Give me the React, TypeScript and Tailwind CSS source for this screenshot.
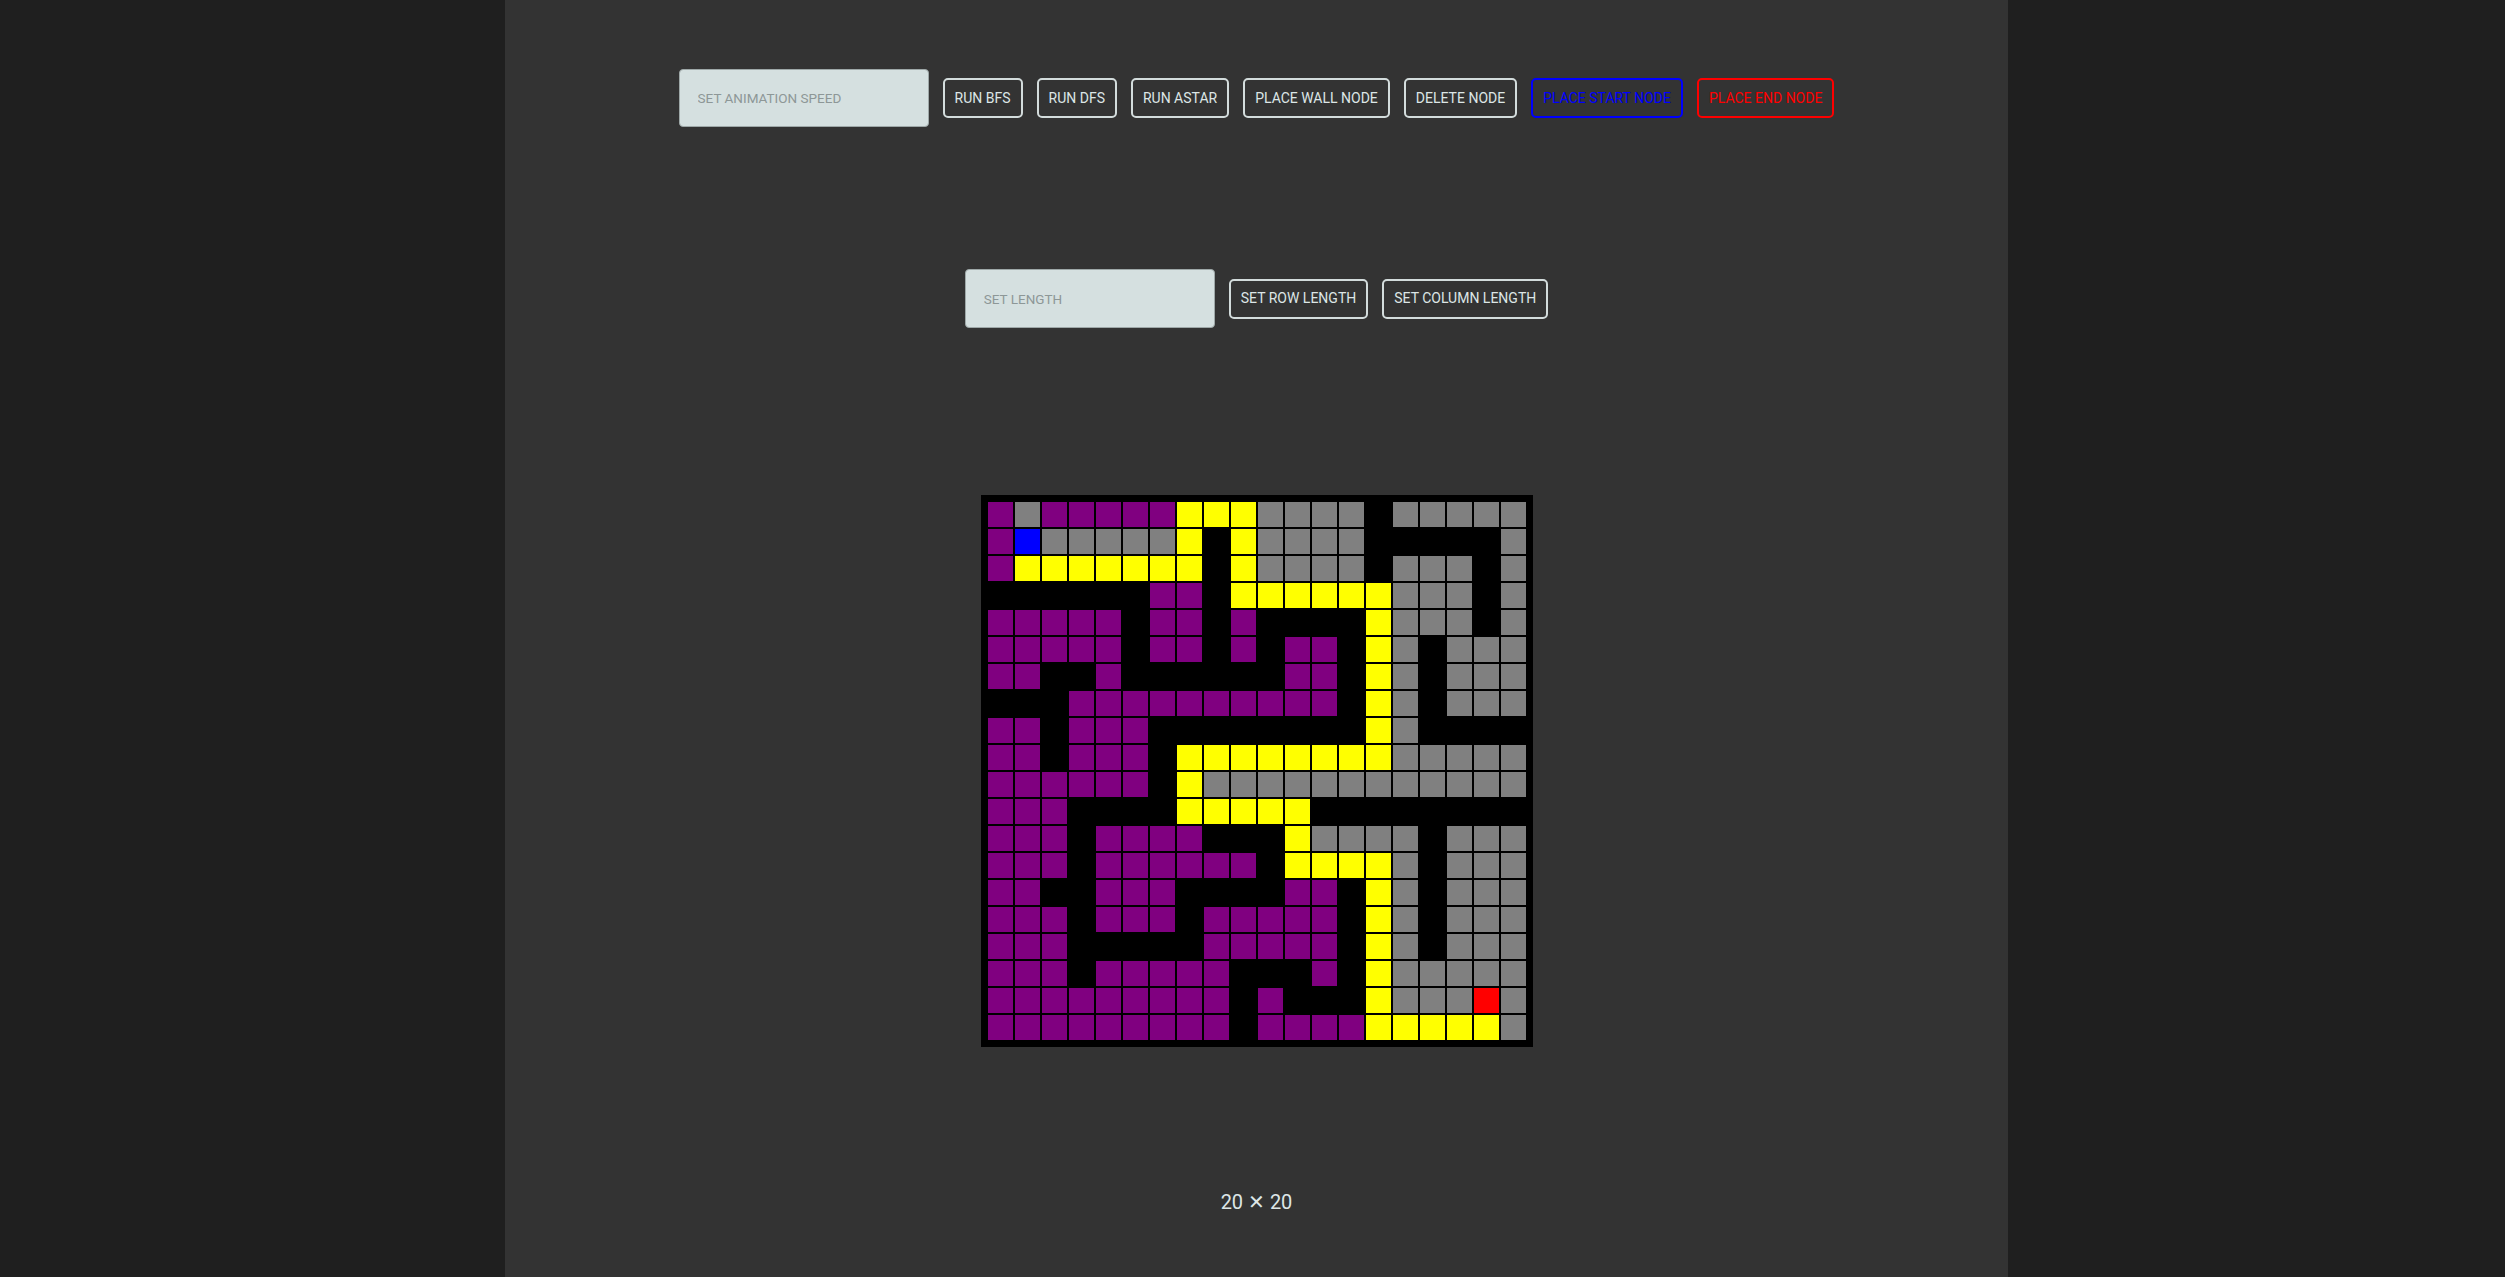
import { useState } from "react"

// maze state after a search run
// P visited, G unvisited, Y path, . wall, B start, R end
const MAZE = [
    "PGPPPPPYYYGGGG.GGGGG",
    "PBGGGGGY.YGGGG.....G",
    "PYYYYYYY.YGGGG.GGG.G",
    "......PP.YYYYYYGGG.G",
    "PPPPP.PP.P....YGGG.G",
    "PPPPP.PP.P.PP.YG.GGG",
    "PP..P......PP.YG.GGG",
    "...PPPPPPPPPP.YG.GGG",
    "PP.PPP........YG....",
    "PP.PPP.YYYYYYYYGGGGG",
    "PPPPPP.YGGGGGGGGGGGG",
    "PPP....YYYYY........",
    "PPP.PPPP...YGGGG.GGG",
    "PPP.PPPPPP.YYYYG.GGG",
    "PP..PPP....PP.YG.GGG",
    "PPP.PPP.PPPPP.YG.GGG",
    "PPP.....PPPPP.YG.GGG",
    "PPP.PPPPP...P.YGGGGG",
    "PPPPPPPPP.P...YGGGRG",
    "PPPPPPPPP.PPPPYYYYYG",
]

function cellColor(c: string) {
    switch (c) {
        case "P": return "bg-[#800080]"
        case "G": return "bg-[#808080]"
        case "Y": return "bg-[#ffff00]"
        case "B": return "bg-[#0000ff]"
        case "R": return "bg-[#ff0000]"
        default: return "bg-black"
    }
}

const btn = "h-[40px] px-[10px] border-2 rounded-[5px] text-[14px] bg-transparent cursor-pointer whitespace-nowrap"
const plain = btn + " border-[#d3dcdc] text-[#dde6e6]"
const field = "w-[250px] pl-[18px] rounded-[4px] border border-[#9ea8a8] bg-[#d5e0e0] text-[13.5px] text-[#444] placeholder:text-[#8d9797] outline-none"

export default function App() {
    const [speed, setSpeed] = useState("")
    const [length, setLength] = useState("")

    return (
        <div className="min-h-screen bg-[#1f1f1f] font-['Roboto',sans-serif]">
            <div className="w-[60%] ml-[calc(20%+4px)] min-h-screen bg-[#333333] flex flex-col items-center pt-[69px]">
                <div className="flex items-center gap-[14px]">
                    <input
                        value={speed}
                        onChange={(e) => setSpeed(e.target.value)}
                        placeholder="SET ANIMATION SPEED"
                        className={field + " h-[58px]"}
                    />
                    <button className={plain}>RUN BFS</button>
                    <button className={plain}>RUN DFS</button>
                    <button className={plain}>RUN ASTAR</button>
                    <button className={plain}>PLACE WALL NODE</button>
                    <button className={plain}>DELETE NODE</button>
                    <button className={btn + " border-[#0000ff] text-[#0000ff]"}>PLACE START NODE</button>
                    <button className={btn + " border-[#ff0000] text-[#ff0000]"}>PLACE END NODE</button>
                </div>

                <div className="flex items-center gap-[14px] mt-[142px]">
                    <input
                        value={length}
                        onChange={(e) => setLength(e.target.value)}
                        placeholder="SET LENGTH"
                        className={field + " h-[59px]"}
                    />
                    <button className={plain}>SET ROW LENGTH</button>
                    <button className={plain}>SET COLUMN LENGTH</button>
                </div>

                <div className="mt-[167px] bg-black p-[7px] grid grid-cols-[repeat(20,25px)] gap-[2px]">
                    {MAZE.map((row, r) =>
                        row.split("").map((c, i) => (
                            <div key={r + "-" + i} className={"h-[25px] " + cellColor(c)}></div>
                        ))
                    )}
                </div>

                <div className="mt-[141px] text-[20px] leading-[28px] text-[#dde6e6] flex items-center gap-[5px]">
                    <span>20</span>
                    <span className="font-['DejaVu_Sans',sans-serif] text-[20px] leading-[28px]">✕</span>
                    <span>20</span>
                </div>
            </div>
        </div>
    )
}
